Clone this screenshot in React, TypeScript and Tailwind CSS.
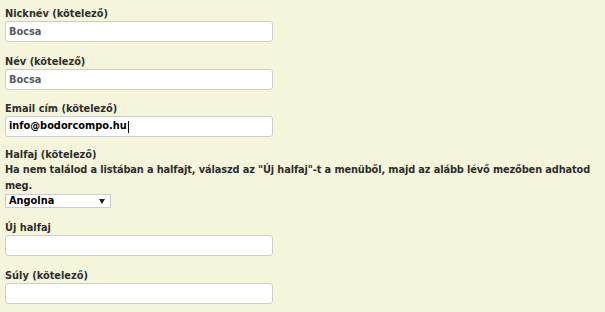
export default function App() {
  const inputCls =
    "block w-[268px] h-[21px] border border-[#cdcdcd] rounded-[3px] bg-white px-[3px] text-[9.8px] font-bold outline-none";

  return (
    <div
      className="min-h-screen w-full bg-[#f5f5dc] pl-[5px] pt-[6px] text-[#2e2e2e] text-[9.8px] font-bold"
      style={{ fontFamily: '"DejaVu Sans", sans-serif' }}
    >
      <div className="mb-[11.5px]">
        <label className="block leading-[15px]">Nicknév (kötelező)</label>
        <input className={inputCls + " text-[#5c5c5c]"} defaultValue="Bocsa" readOnly />
      </div>

      <div className="mb-[11.5px]">
        <label className="block leading-[15px]">Név (kötelező)</label>
        <input className={inputCls + " text-[#5c5c5c]"} defaultValue="Bocsa" readOnly />
      </div>

      <div className="mb-[10px]">
        <label className="block leading-[15px]">Email cím (kötelező)</label>
        <div className={inputCls + " flex items-center text-black"}>
          info@bodorcompo.hu
          <span className="ml-[1px] inline-block w-[1px] h-[12px] bg-black" />
        </div>
      </div>

      <div className="mb-[12px]">
        <label className="block leading-[15px]">Halfaj (kötelező)</label>
        <p className="leading-[15.5px] tracking-[-0.12px] pr-[2px]">
          Ha nem találod a listában a halfajt, válaszd az "Új halfaj"-t a menüből, majd az alább lévő mezőben adhatod meg.
        </p>
        <div className="mt-[1px] w-[106px] h-[14px] border border-[#cdcdcd] bg-white flex items-center justify-between pl-[3px] pr-[5px] text-black leading-[12px]">
          <span>Angolna</span>
          <svg width="6" height="5" viewBox="0 0 6 5">
            <path d="M0 0 L6 0 L3 5 Z" fill="#222" />
          </svg>
        </div>
      </div>

      <div className="mb-[11.5px]">
        <label className="block leading-[15px]">Új halfaj</label>
        <input className={inputCls} />
      </div>

      <div>
        <label className="block leading-[15px]">Súly (kötelező)</label>
        <input className={inputCls} />
      </div>
    </div>
  );
}
